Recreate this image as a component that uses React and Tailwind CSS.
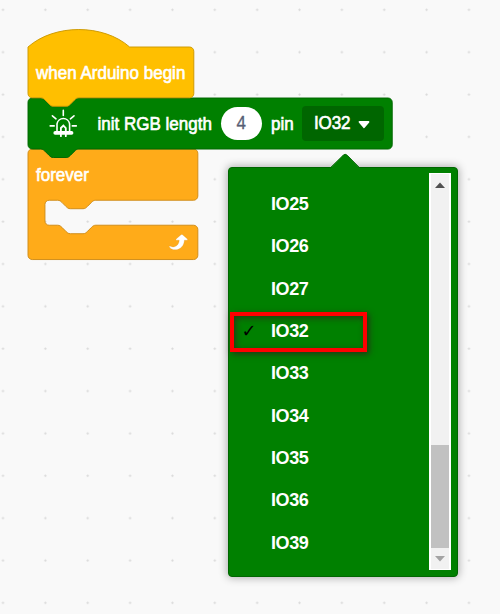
import React from "react";

const pins = ["IO25", "IO26", "IO27", "IO32", "IO33", "IO34", "IO35", "IO36", "IO39"];

const NOTCH_LEFT = "c-2 0-3 1-4 2l-4 4c-1 1-2 2-4 2h-12c-2 0-3-1-4-2l-4-4c-1-1-2-2-4-2";
const NOTCH_RIGHT = "c2 0 3 1 4 2l4 4c1 1 2 2 4 2h12c2 0 3-1 4-2l4-4c1-1 2-2 4-2";

const HAT = `M0 0c25-22 71-22 96 0H152.6a4 4 0 0 1 4 4v40a4 4 0 0 1-4 4H48${NOTCH_LEFT}H4a4 4 0 0 1-4-4z`;
const STATEMENT = `M0 4a4 4 0 0 1 4-4h8${NOTCH_RIGHT}H340a4 4 0 0 1 4 4v40.2a4 4 0 0 1-4 4H48${NOTCH_LEFT}H4a4 4 0 0 1-4-4z`;
const LOOP = `M0 4a4 4 0 0 1 4-4h8${NOTCH_RIGHT}H156.4a4 4 0 0 1 4 4v40.4a4 4 0 0 1-4 4H64${NOTCH_LEFT}h-8a4 4 0 0 0-4 4v15.6a4 4 0 0 0 4 4h8${NOTCH_RIGHT}H156.4a4 4 0 0 1 4 4v24.4a4 4 0 0 1-4 4H4a4 4 0 0 1-4-4z`;

function Shape({ d, fill, stroke }) {
  return (
    <svg className="absolute left-0 top-0 overflow-visible" width="1" height="1" aria-hidden="true">
      <path d={d} fill={fill} stroke={stroke} strokeWidth="0.9" transform="scale(1.0588)" />
    </svg>
  );
}

function Lamp() {
  return (
    <svg className="mt-[9px] ml-[21px] h-[32px] w-[30px] shrink-0" viewBox="0 0 30 32" fill="none" stroke="#fff" strokeWidth="1.6" strokeLinecap="round">
      <path d="M14.3 3.4v5M3.4 8.8l3.6 3M25 8.8l-3.6 3M1.2 18.9h4M23.3 18.9h4M8 24v-7.2a6.4 6.4 0 0 1 12.6 0V24" />
      <path d="M6.2 25.9h16.4" strokeWidth="3.6" />
      <path d="M11.9 24v-3l2.5-2.4 2.4 2.4V24M11.9 27v2.2M16.8 27v2.2" strokeWidth="1.8" />
    </svg>
  );
}

export default function App() {
  return (
    <div className="relative h-[614px] w-[500px] overflow-hidden bg-[#f9f9f9] pl-[27.5px] pt-[46.8px] font-['Liberation_Sans',Arial,sans-serif] text-[17px] leading-5 text-white">
      <svg className="absolute inset-0 h-full w-full" aria-hidden="true">
        <defs>
          <pattern id="dots" x="-18.2" y="-11.5" width="42.36" height="42.36" patternUnits="userSpaceOnUse">
            <path d="M20.1 21.2h2.2M21.2 20.1v2.2" stroke="#d9d9d9" strokeWidth="1.2" />
          </pattern>
        </defs>
        <rect width="100%" height="100%" fill="url(#dots)" />
      </svg>

      <div className="relative z-10 flex flex-col items-start [-webkit-text-stroke:0.6px_currentColor]">
        <div className="relative z-10 h-[50.8px] w-[166px] pl-[8.5px] pt-[17.7px]">
          <Shape d={HAT} fill="#ffbf00" stroke="#cc9900" />
          <span className="relative inline-block origin-left scale-y-[1.05] whitespace-nowrap">when Arduino begin</span>
        </div>

        <div className="relative z-[5] flex h-[51.2px] w-[365px]">
          <Shape d={STATEMENT} fill="#008000" stroke="#006600" />
          <div className="relative flex w-full">
            <Lamp />
            <span className="ml-[19px] mt-[17px] h-5 w-[115px] shrink-0 scale-y-[1.05] whitespace-nowrap">init RGB length</span>
            <span className="ml-[8px] mt-[9.2px] flex h-[33px] w-[41.5px] shrink-0 items-center justify-center rounded-full bg-white pt-px text-[#575e75] [-webkit-text-stroke:0.3px_currentColor]">
              <span className="scale-y-[1.08]">4</span>
            </span>
            <span className="ml-[9px] mt-[17px] h-5 w-[23px] shrink-0 scale-y-[1.05]">pin</span>
            <span className="ml-[7.5px] mt-[8.2px] flex h-[35px] w-[82px] shrink-0 items-center rounded-[4px] bg-[#006600] pl-[12.5px] pt-px">
              <span className="w-[37px] scale-y-[1.06] tracking-[-0.1px]">IO32</span>
              <svg className="ml-[7px] mt-[2px] h-[8px] w-[12px]" viewBox="0 0 12 8">
                <path d="M1.5 1h9L6 6.2z" fill="#fff" stroke="#fff" strokeWidth="1.8" strokeLinejoin="round" />
              </svg>
            </span>
          </div>
        </div>

        <div className="relative h-[110.5px] w-[170px] pl-[8.5px] pt-[17.3px]">
          <Shape d={LOOP} fill="#ffab19" stroke="#cf8b17" />
          <span className="relative inline-block scale-y-[1.05]">forever</span>
          <svg className="absolute left-[141px] top-[85px] h-[18px] w-[20px]" viewBox="0 0 20 18">
            <path d="M.5 12.1c.8-.4 1.8.9 3.7.8 3.3-.2 5.9-3 6-6.7H7.6c-.8 0-1-.8-.5-1.3L12 .8c.5-.5 1.1-.5 1.6 0l4.8 4.1c.5.5.2 1.3-.6 1.3h-2.4c-.2 5.5-4 9.6-9.2 9.6-2.7 0-4.9-1.1-5.8-2.9-.2-.4-.2-.7.1-.8z" fill="#fff" stroke="#cf8b17" strokeWidth=".25" />
          </svg>
        </div>
      </div>

      <div className="absolute left-[227.5px] top-[166.5px] z-20 flex h-[410.5px] w-[230.5px] rounded-[4px] border border-[#006600] bg-[#008000] font-bold shadow-[0_0_8px_1px_rgba(0,0,0,0.3)]">
        <svg className="absolute left-[100px] top-[-15px] h-[17px] w-[32px]" viewBox="0 0 32 17">
          <path d="M1.5 15L14.2 2.3q2-2 4 0L30.5 15v2h-29z" fill="#008000" />
          <path d="M1.5 14.7L14.2 2.3q2-2 4 0l12.3 12.4" fill="none" stroke="#006600" />
        </svg>
        <div className="flex flex-1 flex-col pt-[15.3px]">
          {pins.map((pin) => (
            <div key={pin} className="flex h-[42.36px] w-full items-center">
              <span className="w-[42.5px] pl-[13px] font-['DejaVu_Sans'] text-[18px] font-normal text-black">{pin === "IO32" ? "✓" : ""}</span>
              <span className="text-[18px] tracking-[-0.4px]">{pin}</span>
            </div>
          ))}
        </div>
        <div className="mr-[6px] mt-[5.5px] flex h-[397px] w-[22.5px] flex-col items-center border-2 border-b-[1px] border-t-[1px] border-white bg-[#f1f1f1]">
          <svg className="mt-[8px] h-[6px] w-[10px] shrink-0" viewBox="0 0 10 6"><path d="M0 6L5 .5 10 6z" fill="#505050" /></svg>
          <div className="mt-[256.5px] h-[103.5px] w-[17.5px] shrink-0 bg-[#c1c1c1]" />
          <svg className="mt-[8px] h-[6px] w-[10px] shrink-0" viewBox="0 0 10 6"><path d="M0 0l5 5.5L10 0z" fill="#a3a3a3" /></svg>
        </div>
        <div className="absolute left-[1px] top-[144px] h-[40.5px] w-[137px] border-4 border-[#ff0000] shadow-[2px_2px_6px_rgba(50,30,30,0.8),inset_2px_2px_6px_rgba(50,30,30,0.7)]" />
      </div>
    </div>
  );
}
